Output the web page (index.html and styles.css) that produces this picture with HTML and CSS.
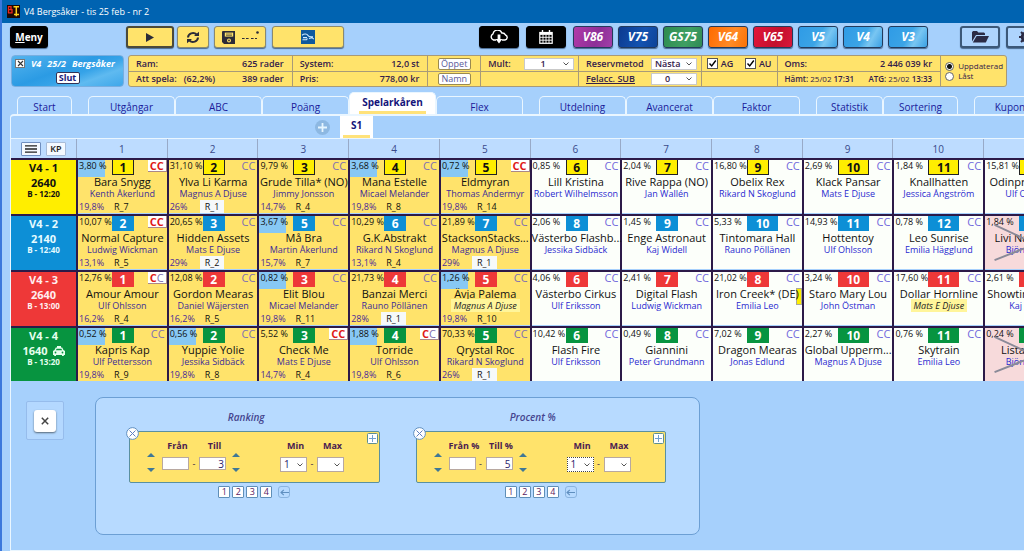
FILE: index.html
```html
<!DOCTYPE html>
<html lang="sv">
<head>
<meta charset="utf-8">
<title>V4 Bergsåker - tis 25 feb - nr 2</title>
<link rel="stylesheet" href="styles.css">
</head>
<body>
<header class="titlebar">
  <svg class="app-icon" viewBox="0 0 13 13" aria-hidden="true"><rect width="13" height="13" fill="#1c0805"/><path d="M1.500 1.500v6.500M1 1.700h3v3M1 4.700h4v3.200H1" fill="none" stroke="#f0281c" stroke-width="1.300"/><path d="M6.500 1.800h5.500M9.300 1.800v9.400M7 9.400h5" fill="none" stroke="#ffd21e" stroke-width="1.500"/></svg>
  <h1 class="title">V4 Bergsåker - tis 25 feb - nr 2</h1>
</header>

<div class="toolbar">
  <div class="group group-menu"><button class="btn black menu"><u>M</u>eny</button></div>
  <div class="group group-actions">
    <button class="btn yellow play" aria-label="Starta"><svg width="8" height="9" viewBox="0 0 8 9"><path d="M0 0l8 4.500L0 9z" fill="#2b2b38"/></svg></button>
    <button class="btn yellow refresh" aria-label="Uppdatera"><svg width="14" height="13" viewBox="0 0 14 13" fill="none" stroke="#2b2b38" stroke-width="2"><path d="M2 6.500a5 4.600 0 0 1 8.600-3"/><path d="M12 6.500a5 4.600 0 0 1-8.600 3"/><path d="M8 5h5V.8z" fill="#2b2b38" stroke="none"/><path d="M6 8H1v4.200z" fill="#2b2b38" stroke="none"/></svg></button>
    <button class="btn yellow save" aria-label="Spara"><svg width="14" height="13" viewBox="0 0 14 13"><path d="M0 1a1 1 0 0 1 1-1h12v13H2l-2-2z" fill="#2b2b38"/><path d="M2.800 1.600h8.400v4H2.800z" fill="#ffe36b"/><path d="M4 3h6M4 4.400h6" stroke="#2b2b38" stroke-width=".6"/><circle cx="7" cy="9.400" r="2" fill="#ffe36b"/><circle cx="7" cy="9.400" r=".9" fill="#2b2b38"/></svg><svg width="17" height="13" viewBox="0 0 17 13"><path d="M0 7.500h2.600M4 7.500h2.600M9 7.500h2.600M13 7.500h2" stroke="#2b2b38" stroke-width="1.200"/><circle cx="15.500" cy="1.500" r="1.300" fill="#2b2b38"/></svg></button>
    <button class="btn yellow atg" aria-label="ATG"><svg width="14" height="14" viewBox="0 0 14 14"><rect width="14" height="14" fill="#0f5a9e"/><path d="M1 5.200c2-1.600 5-1.500 6 .3s3 1.300 5 1.200M2 7.600h4M8 8.500l3-.8 1.800 1.500M1.500 9.800h4l1-1.300" fill="none" stroke="#cfeaff" stroke-width="1.100"/></svg></button>
  </div>
  <div class="group group-games">
    <button class="btn black" aria-label="Hämta"><svg width="20" height="14" viewBox="0 0 20 14" fill="none" stroke="#fff" stroke-width="1.400"><path d="M7 10H4.500A3.300 3.300 0 0 1 4 3.900 4.600 4.600 0 0 1 12.800 3a3.600 3.600 0 0 1 3.700 2A2.600 2.600 0 0 1 16 10h-3"/><path d="M8.600 4.500h2.800V9h2L10 13.400 6.600 9h2z" fill="#fff" stroke="none"/></svg></button>
    <button class="btn black" aria-label="Kalender"><svg width="14" height="14" viewBox="0 0 14 14" fill="none" stroke="#fff"><rect x=".8" y="2.500" width="12.400" height="10.800" stroke-width="1.200"/><path d="M1 3.900h12" stroke-width="2"/><path d="M3.500 0v3M10.500 0v3" stroke-width="1.400"/><path d="M1 7.300h12M1 10.200h12M4 5v8M7 5v8M10 5v8" stroke-width=".9"/></svg></button>
    <button class="btn game purple">V86</button>
    <button class="btn game navy">V75</button>
    <button class="btn game green">GS75</button>
    <button class="btn game orange">V64</button>
    <button class="btn game crimson">V65</button>
    <button class="btn game sky">V5</button>
    <button class="btn game sky">V4</button>
    <button class="btn game sky">V3</button>
  </div>
  <div class="group group-files">
    <button class="btn pale" aria-label="Öppna"><svg width="17" height="12" viewBox="0 0 17 12"><path d="M0 10.500V1.200L1 0h4l1.300 1.500H12L13 2.500V4H4z" fill="#2b2b45"/><path d="M4.600 5H17l-3.200 6.500H.8z" fill="#2b2b45"/></svg></button>
    <button class="btn pale" aria-label="Inställningar"><svg width="14" height="14" viewBox="0 0 14 14"><circle cx="7" cy="7" r="4" fill="none" stroke="#2b2b45" stroke-width="2.600"/><path d="M7 0v14M0 7h14M2 2l10 10M12 2L2 12" stroke="#2b2b45" stroke-width="2"/><circle cx="7" cy="7" r="2.200" fill="#b6d8ff"/></svg></button>
  </div>
</div>

<div class="status">
  <section class="race">
    <div class="race-line"><button class="tiny-x" aria-label="Stäng lopp"><svg width="7" height="7" viewBox="0 0 7 7"><path d="M1 1l5 5M6 1L1 6" stroke="#333" stroke-width="1.100"/></svg></button><span>V4</span><span>25/2</span><span>Bergsåker</span></div>
    <button class="slut">Slut</button>
  </section>
  <section class="info">
    <div class="cell"><div class="line"><span>Ram:</span><b>625 rader</b></div><div class="line"><span>Att spela:</span><span class="mid">(62,2%)</span><b>389 rader</b></div></div>
    <div class="cell"><div class="line"><span>System:</span><b>12,0 st</b></div><div class="line"><span>Pris:</span><b>778,00 kr</b></div></div>
    <div class="cell"><div class="line center"><button class="mini">Öppet</button></div><div class="line center"><button class="mini">Namn</button></div></div>
    <div class="cell"><div class="line"><label for="mult">Mult:</label><select id="mult" class="sel"><option>1</option></select></div><div class="line"></div></div>
    <div class="cell"><div class="line"><label for="reserv">Reservmetod</label><select id="reserv" class="sel"><option>Nästa</option></select></div><div class="line"><label for="sub"><u>Felacc. SUB</u></label><select id="sub" class="sel"><option>0</option></select></div></div>
    <div class="cell tight"><div class="line"><label class="check"><input type="checkbox" checked>AG</label><label class="check"><input type="checkbox" checked>AU</label></div><div class="line"></div></div>
    <div class="cell"><div class="line"><span>Oms:</span><b>2 446 039 kr</b></div><div class="line stamps"><span>Hämt: <i>25/02</i> 17:31</span><span>ATG: <i>25/02</i> 13:33</span></div></div>
    <div class="cell radios"><label><input type="radio" name="mode" checked>Uppdaterad</label><label><input type="radio" name="mode">Låst</label></div>
  </section>
</div>

<nav class="tabs">
  <div class="tabset"><a href="#start" class="tab small">Start</a></div>
  <div class="tabset"><a href="#utgangar" class="tab">Utgångar</a><a href="#abc" class="tab">ABC</a><a href="#poang" class="tab">Poäng</a><a href="#spelarkaren" class="tab active"><span>Spelarkåren</span></a><a href="#flex" class="tab">Flex</a></div>
  <div class="tabset"><a href="#utdelning" class="tab">Utdelning</a><a href="#avancerat" class="tab">Avancerat</a><a href="#faktor" class="tab">Faktor</a></div>
  <div class="tabset"><a href="#statistik" class="tab mid-tab">Statistik</a><a href="#sortering" class="tab mid-tab wide">Sortering</a></div>
  <div class="tabset"><a href="#kuponger" class="tab">Kuponger</a></div>
</nav>

<main class="panel">
  <div class="subtabs">
    <button class="add" aria-label="Lägg till"><svg width="15" height="15" viewBox="0 0 15 15"><circle cx="7.500" cy="7.500" r="7.500" fill="#8db8e2"/><path d="M7.500 3v9M3 7.500h9" stroke="#e6f5ff" stroke-width="1.800"/></svg></button>
    <a href="#s1" class="subtab"><span>S1</span></a>
  </div>
  <table class="grid">
    <thead><tr id="head"><th class="corner"><div class="corner-in"><button class="square" aria-label="Meny"><svg width="12" height="8" viewBox="0 0 12 8"><path d="M0 .8h12M0 4h12M0 7.200h12" stroke="#222" stroke-width="1.300"/></svg></button><button class="square kp">KP</button></div></th></tr></thead>
    <tbody id="rows"></tbody>
  </table>

  <div class="lower">
    <div class="close-box"><button class="close" aria-label="Stäng"><svg width="8" height="8" viewBox="0 0 8 8"><path d="M.8.8l6.400 6.400M7.200.8L.8 7.200" stroke="#444" stroke-width="1.500"/></svg></button></div>
    <section class="conditions" id="conditions"></section>
  </div>
</main>
<script src="app.js"></script>
</body>
</html>
```

FILE: styles.css
```css
* { box-sizing: border-box; }

body {
  margin: 0;
  min-height: 100vh;
  display: flex;
  flex-direction: column;
  overflow: hidden;
  border-left: 2px solid #3b78dc;
  background: #a6d0fc;
  color: #34204a;
  font-family: "Open Sans", "Noto Sans", sans-serif;
  font-size: 9px;
  line-height: 14px;
}

button, input, select {
  margin: 0;
  padding: 0;
  font: inherit;
  color: inherit;
}

button {
  display: flex;
  align-items: center;
  justify-content: center;
  background: none;
  border: 0;
}

a { color: inherit; text-decoration: none; }
i { font-style: normal; font-weight: 400; }

/* Title bar */
.titlebar {
  display: flex;
  align-items: center;
  gap: 4px;
  height: 23px;
  margin-left: -2px;
  padding-left: 7px;
  background: #0063b1;
  color: #fff;
}
.app-icon { width: 13px; height: 13px; }
.title { margin: 0; font-size: 9px; font-weight: 400; }

/* Toolbar */
.toolbar { display: flex; margin-top: 3px; padding-left: 8px; }
.group { display: flex; flex: none; gap: 5px; }
.group-menu { width: 116px; }
.group-actions { width: 353px; }
.group-games { width: 481px; }
.group-files { gap: 6px; }

.btn {
  flex: none;
  width: 40px;
  height: 22px;
  border: 1px solid #777;
  border-radius: 3px;
  box-shadow: 0 1px 1px #4a6a90;
}
.black { margin-right: 2px; background: #000; border-color: #000; color: #fff; }
.menu { width: 38px; font-size: 10px; font-weight: 700; }
.yellow { background: #ffe36b; border-color: #8a8a70; }
.play { width: 48px; border: 2px solid #4b4a3a; }
.refresh { width: 32px; margin-left: -2px; }
.save { width: 52px; gap: 6px; }
.atg { width: 72px; margin-left: 1px; }

.game {
  border-color: #223a5c;
  color: #fff;
  font-size: 12px;
  font-style: italic;
  font-weight: 700;
}
.purple { background: linear-gradient(110deg, #b23aa8, #8d2f97 60%, #a23fa8); }
.navy { background: linear-gradient(110deg, #0c3a90, #1453b0 60%, #0d4398); }
.green { background: linear-gradient(110deg, #2d8b50, #3f9f62 60%, #2f8a55); }
.orange { background: linear-gradient(110deg, #ff6a00, #ff8b26 60%, #fb7206); }
.crimson { background: linear-gradient(110deg, #e3163a, #c3102c 60%, #d8183a); }
.sky { background: linear-gradient(120deg, #2f9be6, #3ba4e6 50%, #79c6f2 70%, #3aa0e4); }
.pale { background: #aed4fd; border: 2px solid #3c5878; }

/* Status strip */
.status {
  display: flex;
  gap: 4px;
  height: 32px;
  margin: 7px 17px 0 9px;
}

.race {
  flex: none;
  display: flex;
  flex-direction: column;
  gap: 3px;
  width: 113px;
  padding: 2px 3px;
  border: 1px solid #78aee0;
  border-radius: 4px;
  background: linear-gradient(160deg, #55b4ee, #2b9be4 45%, #36a3e8 60%, #5fbaf0 75%, #3ea7ea);
  color: #fff;
  font-style: italic;
  font-weight: 700;
}
.race-line { display: flex; align-items: center; gap: 6px; line-height: 11px; }
.tiny-x {
  flex: none;
  width: 10px;
  height: 9px;
  background: #fff;
  border: 1px solid #777;
}
.slut {
  flex: none;
  align-self: center;
  width: 24px;
  height: 12px;
  background: #fff;
  border: 1px solid #335;
  border-radius: 2px;
  color: #1a1a7a;
  font-style: normal;
  line-height: 10px;
}

.info {
  flex: 1;
  display: grid;
  grid-template-columns: 163fr 136fr 53fr 98fr 123fr 76fr 164fr 66fr;
  overflow: hidden;
  border: 1px solid #a89a78;
  border-radius: 3px;
  background: #ffe36b;
  font-weight: 600;
  white-space: nowrap;
}
.cell { min-width: 0; display: grid; grid-template-rows: 1fr 1fr; border-left: 1px solid #a89a78; }
.cell:first-child { border-left: 0; }
.line {
  display: flex;
  align-items: center;
  justify-content: space-between;
  min-width: 0;
  padding: 0 8px 0 7px;
}
.line + .line { border-top: 1px solid #a89a78; }
.line b { font-weight: 600; }
.stamps { font-size: 8px; }
.mid { margin-right: 20px; }
.center { justify-content: center; padding: 0; }
.mini {
  width: 33px;
  height: 12px;
  background: #fff;
  border: 1px solid #9a8a50;
  border-radius: 2px;
  color: #5a5a9a;
  font-weight: 400;
}
select {
  appearance: none;
  height: 12px;
  background: #fff url("data:image/svg+xml,%3Csvg xmlns='http://www.w3.org/2000/svg' viewBox='0 0 6 4'%3E%3Cpath d='M.5.5L3 3 5.500.5' fill='none' stroke='%23555'/%3E%3C/svg%3E") no-repeat right 4px center / 6px 4px;
  border: 1px solid #c9c9c9;
  border-radius: 0;
}
.sel { width: 46px; padding-right: 12px; line-height: 10px; text-align: center; text-align-last: center; }
#mult { width: 50px; margin-right: -4px; }
.cell:nth-child(5) .line { padding-right: 4px; }
.tight .line { padding: 0 5px 0 5px; }
.check { display: flex; align-items: center; gap: 3px; }
.check input {
  appearance: none;
  width: 11px;
  height: 11px;
  border: 1px solid #555;
  background: #fff url("data:image/svg+xml,%3Csvg xmlns='http://www.w3.org/2000/svg' viewBox='0 0 9 9'%3E%3Cpath d='M1.500 4.500L3.700 7 7.800 1.500' fill='none' stroke='%23000' stroke-width='1.400'/%3E%3C/svg%3E") center / 9px 9px no-repeat;
}
.radios { grid-template-rows: 10px 10px; align-content: center; padding-left: 4px; font-size: 8px; font-weight: 400; }
.radios label { display: flex; align-items: center; gap: 4px; line-height: 10px; }
.radios input {
  appearance: none;
  flex: none;
  width: 9px;
  height: 9px;
  border: 1px solid #666;
  border-radius: 50%;
  background: #fff;
}
.radios input:checked { background: radial-gradient(circle, #111 2px, #fff 3px); }

/* Tabs */
.tabs { display: flex; align-items: flex-end; gap: 16px; height: 22px; margin-top: 5px; padding-left: 15px; }
.tabset { display: flex; flex: none; align-items: flex-end; }
.tab {
  width: 87px;
  height: 18px;
  border: solid #eaf6ff;
  border-width: 1px 1px 0;
  border-radius: 5px 5px 0 0;
  color: #1a1a9a;
  font-size: 10px;
  line-height: 21px;
  text-align: center;
}
.small { width: 55px; }
.mid-tab { width: 67px; }
.wide { width: 75px; }
.active { height: 22px; background: #fff; color: #14147a; font-weight: 700; }
.active span { display: block; margin: 0 9px; border-bottom: 3px solid #ffe27a; line-height: 18px; }

/* Panel */
.panel {
  flex: 1;
  margin-left: 8px;
  border: solid #eaf6ff;
  border-width: 2px 0 2px 1px;
  border-top-left-radius: 4px;
  overflow: hidden;
}
.subtabs { display: flex; align-items: center; gap: 10px; height: 22px; padding-left: 304px; }
.add { width: 15px; }
.subtab {
  width: 33px;
  height: 22px;
  background: #fff;
  color: #14147a;
  font-size: 10px;
  font-weight: 700;
  text-align: center;
  line-height: 19px;
}
.subtab span { display: block; margin: 0 3px; border-bottom: 3px solid #ffe27a; }

/* Race grid */
.grid {
  table-layout: fixed;
  width: calc(100% + 50px);
  border-collapse: separate;
  border-spacing: 0;
  border-top: 1px solid #eaf6ff;
}
.grid th, .grid td { padding: 0; }
thead th { height: 19px; background: #bddcff; border-left: 1px solid #98aac8; color: #3a4a8a; font-size: 10px; font-weight: 400; }
thead .corner { width: 65px; border-left: 0; }
.corner-in { display: flex; justify-content: center; align-items: center; gap: 5px; }
.square {
  width: 20px;
  height: 14px;
  background: #f4f9ff;
  border: 1px solid #6f8fc0;
  border-radius: 1px;
}
.kp { border-color: #a8bcd8; color: #222; font-size: 9px; font-weight: 600; }

tbody th, tbody td { height: 56px; border-top: 2px solid #2c1a48; vertical-align: top; }
tbody tr:last-child th, tbody tr:last-child td { height: 55px; }
tbody td { border-left: 2px solid #2c1a48; }
.race-head { font-weight: 700; font-size: 11px; text-align: center; }
.race-head div { line-height: 15px; }
.race-head small { display: block; font-size: 8px; line-height: 8px; }
.race-head svg { margin-left: 5px; vertical-align: -1px; }
.leg1 .race-head { background: #ffee00; color: #111; }
.leg2 .race-head { background: #0d8fd6; color: #e6fbff; }
.leg3 .race-head { background: #ee3838; color: #ffeef0; }
.leg4 .race-head { background: #079440; color: #e6ffee; }

.horse {
  position: relative;
  display: flex;
  flex-direction: column;
  height: 53px;
  background: #fcfffa;
  text-align: center;
  white-space: nowrap;
}
.picked { background: #ffe36b; }
.scratched { background: #f7dadb; }
.cross { position: absolute; inset: 0; width: 100%; height: 100%; }
.top { display: flex; height: 15px; }
.pct { width: 34px; height: 16px; color: #111; line-height: 11px; text-align: left; }
.pct span { display: block; width: 27px; height: 17px; padding-left: 1px; }
.low span { background: #87c8f4; }
.num {
  width: 22px;
  height: 15px;
  color: #fff;
  font-size: 12px;
  font-weight: 700;
  line-height: 15px;
}
.two { width: 31px; }
.leg1 .num { background: #ffee00; border: solid #222; border-width: 0 1px 1px; color: #111; }
.leg2 .num { background: #0d8fd6; }
.leg3 .num { background: #ee3838; }
.leg4 .num { background: #079440; }
.cc { height: 12px; margin: 0 2px 0 auto; color: #7068dc; font-size: 11px; line-height: 12px; }
.picked .cc { color: #8070b0; }
.cc.boxed { margin-right: 0; padding: 0 2px; background: #fff; border: solid #a88; border-width: 0 1px 1px 0; }
.cc b { color: #e01818; }
.name { position: relative; color: #111; font-size: 11px; line-height: 14px; }
.driver { position: relative; color: #2a2ad0; line-height: 9px; }
.picked .driver { color: #3c2c98; }
.driver em { padding: 0 3px; background: #fff59a; color: #222; }
.bottom { display: flex; height: 13px; margin-top: 2px; padding-left: 1px; line-height: 14px; text-align: left; }
.share { width: 30px; color: #4a2a98; }
.rank { padding: 0 5px; color: #111; }
.rank.best { background: #f6f9fa; }
.note { position: absolute; right: 0; top: 16px; width: 6px; height: 17px; background: #ffee00; border: 1px solid #aa9; }

/* Lower area */
.lower { display: flex; align-items: flex-start; gap: 31px; padding: 16px 0 15px 15px; }
.close-box { display: grid; place-items: center; width: 38px; height: 39px; margin-top: 4px; background: #b4d8ff; border: 1px solid #96bcec; border-radius: 2px; }
.close { width: 22px; height: 22px; background: #fff; border-radius: 3px; box-shadow: 0 1px 2px #567; }
.conditions {
  display: flex;
  gap: 36px;
  width: 605px;
  height: 138px;
  padding: 11px 33px;
  background: #b7daff;
  border: 1px solid #6c9fd4;
  border-radius: 8px;
}
.condition { flex: 1; }
.condition h2 { margin: 0 16px 6px 0; color: #45458f; font-size: 10px; font-style: italic; font-weight: 600; line-height: 16px; text-align: center; }
.form {
  position: relative;
  display: flex;
  align-items: flex-end;
  height: 52px;
  padding: 0 0 10px 17px;
  background: #ffe36b;
  border: 1px solid #5a90a0;
  border-radius: 2px;
}
.round-x { position: absolute; left: -4px; top: -5px; }
.plus { position: absolute; right: 1px; top: 1px; }
.spin { display: flex; flex-direction: column; gap: 11px; margin-right: 7px; }
.spin button { border: solid transparent; border-width: 0 4px 4px; border-bottom-color: #3f7896; }
.spin .down { border-width: 4px 4px 0; border-top-color: #3f7896; }
.field { display: flex; flex-direction: column; align-items: center; width: 27px; height: 33px; }
.field label { flex: none; height: 14px; margin-bottom: 4px; padding-left: 4px; color: #4a2050; font-weight: 700; white-space: nowrap; }
.field input { width: 27px; height: 13px; padding: 0 1px; border: 1px solid #b8a8a0; background: #fff; color: #2a1a6a; font-size: 10px; text-align: right; }
.field select { width: 27px; height: 15px; padding-left: 3px; border-color: #b8a8a0; background-position: right 3px center; color: #2a1a6a; font-size: 10px; line-height: 13px; }
.field select.dotted { border: 1px dotted #444; }
.dash { width: 10px; text-align: center; line-height: 16px; }
.field + .spin { margin: 0 40px 0 6px; }
.pager { display: flex; justify-content: center; gap: 2px; margin-top: 3px; }
.pager button { width: 12px; height: 12px; background: #fff; border: 1px solid #5f8fb8; border-radius: 1px; color: #5a2060; }
.pager .back { margin-left: 4px; background: none; border-color: #8ab4e0; border-radius: 3px; }
```

FILE: app.js
```js
// Horse: [percent, number, name, driver, share, rank, flags]
// flags: l = low percent, C = both C red, c = first C red, x = scratched, e = highlighted driver, n = note, b = best rank
const legs = [
  { title: 'V4 - 1', dist: '2640', start: 'B - 12:20', horses: [
    ['3,80', 1, 'Bara Snygg', 'Kenth Åkerlund', '19,8%', 'R_7', 'lC'],
    ['31,10', 2, 'Ylva Li Karma', 'Magnus A Djuse', '26%', 'R_1', ''],
    ['9,79', 3, 'Grude Tilla* (NO)', 'Jimmy Jonsson', '14,7%', 'R_4', ''],
    ['3,68', 4, 'Mana Estelle', 'Micael Melander', '19,8%', 'R_8', 'l'],
    ['0,72', 5, 'Eldmyran', 'Thomas Andermyr', '19,8%', 'R_14', 'lC'],
    ['0,85', 6, 'Lill Kristina', 'Robert Wilhelmsson'],
    ['2,04', 7, 'Rive Rappa (NO)', 'Jan Wallén'],
    ['16,80', 9, 'Obelix Rex', 'Rikard N Skoglund'],
    ['2,69', 10, 'Klack Pansar', 'Mats E Djuse'],
    ['1,84', 11, 'Knallhatten', 'Jessica Ångström'],
    ['15,81', 12, 'Odinprinsessan', 'Ulf Ohlsson']] },
  { title: 'V4 - 2', dist: '2140', start: 'B - 12:40', horses: [
    ['10,07', 2, 'Normal Capture', 'Ludwig Wickman', '13,1%', 'R_5', 'C'],
    ['20,65', 3, 'Hidden Assets', 'Mats E Djuse', '29%', 'R_2', 'b'],
    ['3,67', 5, 'Må Bra', 'Martin Åkerlund', '15,7%', 'R_7', 'l'],
    ['10,29', 6, 'G.K.Abstrakt', 'Rikard N Skoglund', '13,1%', 'R_4', ''],
    ['21,89', 7, 'StacksonStacks...', 'Magnus A Djuse', '29%', 'R_1', ''],
    ['2,06', 8, 'Västerbo Flashb...', 'Jessika Sidbäck'],
    ['1,45', 9, 'Enge Astronaut', 'Kaj Widell'],
    ['5,33', 10, 'Tintomara Hall', 'Rauno Pöllänen'],
    ['14,93', 11, 'Hottentoy', 'Ulf Ohlsson'],
    ['0,78', 12, 'Leo Sunrise', 'Emilia Hägglund'],
    ['1,84', 13, 'Livi Nautica F.', 'Björn Goop', '', '', 'x']] },
  { title: 'V4 - 3', dist: '2640', start: 'B - 13:00', horses: [
    ['12,76', 1, 'Amour Amour', 'Ulf Ohlsson', '16,2%', 'R_4', 'c'],
    ['12,08', 2, 'Gordon Mearas', 'Daniel Wäjersten', '16,2%', 'R_5', ''],
    ['0,82', 3, 'Elit Blou', 'Micael Melander', '19,8%', 'R_11', 'l'],
    ['21,73', 4, 'Banzai Merci', 'Rauno Pöllänen', '28%', 'R_1', ''],
    ['1,26', 5, 'Ävja Palema', 'Magnus A Djuse', '19,8%', 'R_10', 'le'],
    ['4,06', 6, 'Västerbo Cirkus', 'Ulf Eriksson'],
    ['2,41', 7, 'Digital Flash', 'Ludwig Wickman'],
    ['21,02', 8, 'Iron Creek* (DE)', 'Emilia Leo', '', '', 'n'],
    ['3,24', 10, 'Staro Mary Lou', 'John Östman'],
    ['17,60', 11, 'Dollar Hornline', 'Mats E Djuse', '', '', 'e'],
    ['2,61', 12, 'Showtime Amer.', 'Kaj Widell']] },
  { title: 'V4 - 4', dist: '1640', start: 'B - 13:20', auto: true, horses: [
    ['0,52', 1, 'Kapris Kap', 'Ulf Pettersson', '19,8%', 'R_9', 'l'],
    ['0,56', 2, 'Yuppie Yolie', 'Jessika Sidbäck', '19,8%', 'R_8', 'l'],
    ['5,52', 3, 'Check Me', 'Mats E Djuse', '14,7%', 'R_4', 'C'],
    ['1,88', 4, 'Torride', 'Ulf Ohlsson', '19,8%', 'R_6', 'lc'],
    ['70,33', 5, 'Qrystal Roc', 'Rikard N Skoglund', '26%', 'R_1', ''],
    ['10,42', 6, 'Flash Fire', 'Ulf Eriksson'],
    ['0,49', 8, 'Giannini', 'Peter Grundmann'],
    ['7,02', 9, 'Dragon Mearas', 'Jonas Edlund'],
    ['2,27', 10, 'Global Upperm...', 'Magnus A Djuse'],
    ['0,76', 11, 'Skytrain', 'Emilia Leo'],
    ['0,24', 12, 'Lista Brolin', 'Björn Goop', '', '', 'x']] }
];

const conditions = [
  { id: 'r', title: 'Ranking', from: 'Från', to: 'Till', value: '3', cls: '' },
  { id: 'p', title: 'Procent %', from: 'Från %', to: 'Till %', value: '5', cls: 'dotted' }
];

const car = '<svg width="12" height="10" viewBox="0 0 12 10"><path d="M4 0h4v1.500h1.200L10.500 4 12 5v4h-1.200v1H9V9H3v1H1.200V9H0V5l1.500-1 1.300-2.500H4z" fill="#e6ffee"/><path d="M3.600 2.700h4.800l.7 1.600H2.900z" fill="#079440"/><circle cx="2.500" cy="6.500" r=".9" fill="#079440"/><circle cx="9.500" cy="6.500" r=".9" fill="#079440"/></svg>';

function horse([pct, num, name, driver, share, rank, flags = '']) {
  const has = f => flags.includes(f);
  const cls = share ? ' picked' : has('x') ? ' scratched' : '';
  const cc = has('C') ? '<b>CC</b>' : has('c') ? '<b>C</b>C' : 'CC';
  const best = rank === 'R_1' || has('b') ? ' best' : '';
  return `<td><div class="horse${cls}">
    ${has('n') ? '<span class="note"></span>' : ''}
    <div class="top"><div class="pct${has('l') ? ' low' : ''}"><span>${pct} %</span></div>
    <div class="num${num > 9 ? ' two' : ''}">${num}</div>
    <div class="cc${has('C') || has('c') ? ' boxed' : ''}">${cc}</div></div>
    <div class="name">${name}</div>
    <div class="driver">${has('e') ? `<em>${driver}</em>` : driver}</div>
    ${share ? `<div class="bottom"><span class="share">${share}</span><span class="rank${best}">${rank}</span></div>` : ''}
    ${has('x') ? '<svg class="cross" viewBox="0 0 89 54"><path d="M9 9l73 34M9 45l73-29" stroke="#8a8a98" stroke-width="2"/></svg>' : ''}
  </div></td>`;
}

function condition(c) {
  const spin = '<div class="spin"><button aria-label="Öka"></button><button class="down" aria-label="Minska"></button></div>';
  const dash = '<span class="dash">-</span>';
  return `<div class="condition"><h2>${c.title}</h2>
    <div class="form">
      <button class="round-x" aria-label="Ta bort"><svg width="13" height="13" viewBox="0 0 13 13"><circle cx="6.500" cy="6.500" r="5.900" fill="#fff" stroke="#5f8fc0"/><path d="M3.500 3.500l6 6M9.500 3.500l-6 6" stroke="#5f7fc0"/></svg></button>
      <button class="plus" aria-label="Lägg till"><svg width="11" height="11" viewBox="0 0 11 11"><rect x=".5" y=".5" width="10" height="10" rx="1" fill="#fff" stroke="#5f8f90"/><path d="M5.500 2v7M2 5.500h7" stroke="#6f9fd0"/></svg></button>
      ${spin}
      <div class="field"><label for="${c.id}1">${c.from}</label><input id="${c.id}1" value=""></div>${dash}
      <div class="field"><label for="${c.id}2">${c.to}</label><input id="${c.id}2" value="${c.value}"></div>
      ${spin}
      <div class="field"><label for="${c.id}3">Min</label><select id="${c.id}3" class="${c.cls}"><option>1</option></select></div>${dash}
      <div class="field"><label for="${c.id}4">Max</label><select id="${c.id}4"><option></option></select></div>
    </div>
    <div class="pager">${[1, 2, 3, 4].map(n => `<button>${n}</button>`).join('')}<button class="back" aria-label="Tillbaka"><svg width="9" height="7" viewBox="0 0 9 7"><path d="M9 3.500H1.200M3.800.8L1 3.500l2.800 2.700" fill="none" stroke="#5f8fc0" stroke-width="1.100"/></svg></button></div>
  </div>`;
}

const head = document.getElementById('head');
for (let i = 1; i <= 11; i++) head.insertAdjacentHTML('beforeend', `<th scope="col">${i}</th>`);

document.getElementById('rows').innerHTML = legs.map((leg, i) => `<tr class="leg${i + 1}">
  <th scope="row" class="race-head"><div>${leg.title}</div><div>${leg.dist}${leg.auto ? car : ''}</div><small>${leg.start}</small></th>
  ${leg.horses.map(horse).join('')}</tr>`).join('');

document.getElementById('conditions').innerHTML = conditions.map(condition).join('');
```
